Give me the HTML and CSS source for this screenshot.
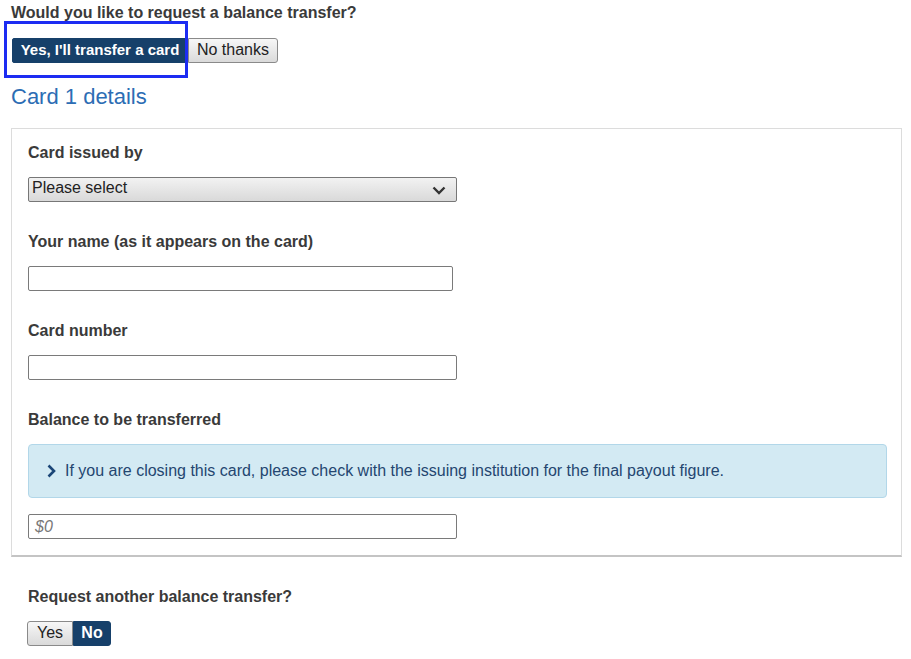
FILE: index.html
```html
<!DOCTYPE html>
<html>
<head>
<meta charset="utf-8">
<link rel="stylesheet" href="styles.css">
</head>
<body>
<div class="page">
  <p class="question">Would you like to request a balance transfer?</p>
  <div class="toggle toggle-main">
    <button class="btn btn-active">Yes, I'll transfer a card<span class="focus-ring"></span></button>
    <button class="btn btn-plain btn-last">No thanks</button>
  </div>
  <h2 class="section-title">Card 1 details</h2>
  <div class="panel">
    <div class="field">
      <label class="label">Card issued by</label>
      <div class="select">
        <span>Please select</span>
        <svg class="chev-down" width="14" height="9" viewBox="0 0 14 9"><path d="M1.5 1.5 L7 7 L12.5 1.5" fill="none" stroke="#333" stroke-width="2.4"/></svg>
      </div>
    </div>
    <div class="field">
      <label class="label">Your name (as it appears on the card)</label>
      <div class="input input-short"></div>
    </div>
    <div class="field">
      <label class="label">Card number</label>
      <div class="input"></div>
    </div>
    <div class="field">
      <label class="label">Balance to be transferred</label>
      <div class="info">
        <svg class="chev-right" width="9" height="14" viewBox="0 0 9 14"><path d="M1.5 1.5 L7 7 L1.5 12.5" fill="none" stroke="#1b4677" stroke-width="2.6"/></svg>
        <span>If you are closing this card, please check with the issuing institution for the final payout figure.</span>
      </div>
      <div class="input"><span class="placeholder">$0</span></div>
    </div>
  </div>
  <div class="another">
    <p class="label">Request another balance transfer?</p>
    <div class="toggle toggle-small">
      <button class="btn btn-plain btn-first">Yes</button>
      <button class="btn btn-active btn-last">No</button>
    </div>
  </div>
</div>
</body>
</html>
```

FILE: styles.css
```css
html, body {
  margin: 0;
  padding: 0;
  background: #ffffff;
}
body {
  font-family: "Liberation Sans", Arial, Helvetica, sans-serif;
  color: #3a3a3a;
}
.page {
  padding: 4px 7px 0 11px;
}
.question {
  margin: 0;
  font-size: 16px;
  line-height: 18px;
  font-weight: bold;
}
.toggle {
  display: flex;
}
.toggle-main {
  margin-top: 16px;
  margin-left: 1px;
}
.btn {
  position: relative;
  box-sizing: border-box;
  font-family: "Liberation Sans", Arial, Helvetica, sans-serif;
  font-size: 16px;
  line-height: 20px;
  height: 25px;
  margin: 0;
  padding: 0 8px 2px 8px;
  border: 1px solid #8a8a8a;
  border-radius: 0;
  white-space: nowrap;
  cursor: pointer;
}
.btn-active {
  background: #16406a;
  border-color: #16406a;
  color: #ffffff;
  font-weight: bold;
  font-size: 15px;
}
.btn-plain {
  background: linear-gradient(#f7f7f7, #dadada);
  color: #222222;
}
.btn-last {
  border-radius: 0 3px 3px 0;
}
.btn-first {
  border-radius: 3px 0 0 3px;
}
.toggle-main .btn-active {
  width: 176px;
  padding: 0 0 2px 0;
  border-radius: 2px 0 0 2px;
}
.toggle-main .btn-plain {
  width: 90px;
  padding: 0 0 2px 0;
}
.focus-ring {
  position: absolute;
  left: -9px;
  top: -18px;
  width: 178px;
  height: 51px;
  border: 3px solid #1c2cf2;
  pointer-events: none;
}
.section-title {
  margin: 21px 0 0 0;
  font-size: 22px;
  line-height: 26px;
  font-weight: normal;
  color: #2c6db4;
}
.panel {
  margin-top: 18px;
  width: 891px;
  border: 1px solid #dcdcdc;
  border-bottom: 2px solid #c4c4c4;
  padding: 14px 16px 16px 16px;
  box-sizing: border-box;
  display: flex;
  flex-direction: column;
  gap: 30px;
}
.field {
  display: flex;
  flex-direction: column;
  align-items: flex-start;
}
.label {
  display: block;
  margin: 0 0 15px 0;
  padding-top: 1px;
  font-size: 16px;
  line-height: 18px;
  font-weight: bold;
  color: #3a3a3a;
}
.select {
  width: 429px;
  height: 25px;
  box-sizing: border-box;
  border: 1px solid #777777;
  border-radius: 2px;
  background: linear-gradient(#f2f2f2, #d9d9d9);
  display: flex;
  align-items: center;
  justify-content: space-between;
  padding: 0 10px 3px 3px;
  font-size: 16px;
  color: #222222;
}
.chev-down {
  margin-top: 4px;
}
.input {
  width: 429px;
  height: 25px;
  box-sizing: border-box;
  border: 1px solid #7a7a7a;
  border-radius: 2px;
  background: #ffffff;
  display: flex;
  align-items: center;
  padding: 0 6px;
}
.input-short {
  width: 425px;
}
.placeholder {
  font-size: 16px;
  font-style: italic;
  color: #777777;
}
.info {
  width: 859px;
  height: 54px;
  box-sizing: border-box;
  background: #d3eaf3;
  border: 1px solid #b2d7e9;
  border-radius: 4px;
  display: flex;
  align-items: center;
  gap: 9px;
  padding: 0 0 0 18px;
  margin-bottom: 16px;
  font-size: 16px;
  color: #244670;
}
.another {
  margin-top: 30px;
  padding-left: 17px;
}
.toggle-small {
  margin-left: -1px;
}
.toggle-small .btn-plain {
  width: 46px;
  padding: 0 0 2px 0;
}
.toggle-small .btn-active {
  width: 38px;
  padding: 0 0 2px 0;
  font-size: 16px;
}
```
